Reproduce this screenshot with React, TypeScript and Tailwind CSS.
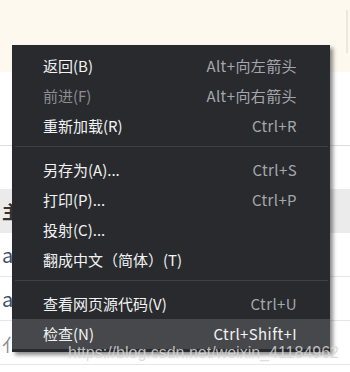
import React from "react";

type Item =
  | { kind: "item"; label: string; shortcut?: string; disabled?: boolean; active?: boolean }
  | { kind: "sep" };

const items: Item[] = [
  { kind: "item", label: "返回(B)", shortcut: "Alt+向左箭头" },
  { kind: "item", label: "前进(F)", shortcut: "Alt+向右箭头", disabled: true },
  { kind: "item", label: "重新加载(R)", shortcut: "Ctrl+R" },
  { kind: "sep" },
  { kind: "item", label: "另存为(A)...", shortcut: "Ctrl+S" },
  { kind: "item", label: "打印(P)...", shortcut: "Ctrl+P" },
  { kind: "item", label: "投射(C)..." },
  { kind: "item", label: "翻成中文（简体）(T)" },
  { kind: "sep" },
  { kind: "item", label: "查看网页源代码(V)", shortcut: "Ctrl+U" },
  { kind: "item", label: "检查(N)", shortcut: "Ctrl+Shift+I", active: true },
];

export default function App() {
  return (
    <div
      className="relative w-[350px] h-[372px] overflow-hidden bg-white"
      style={{ fontFamily: '"Noto Sans CJK SC", "Noto Sans", sans-serif' }}
    >
      {/* background page */}
      <div className="flex flex-col">
        <div className="h-[72px] bg-[#fdf9ef] flex justify-end pt-[10px] pr-[2px]">
          <div className="w-[2px] h-[43px] bg-[#ece8df]" />
        </div>
        <div className="h-[74px] border-b border-[#dcdce6]" />
        <div className="h-[43px]" />
        <div className="h-[44px] bg-[#ebebeb] flex items-center pl-[2px] text-[18px] font-bold text-[#333]">主</div>
        <div className="h-[44px] border-b border-[#e6e6e6] flex items-center pl-[2px] text-[20px] text-[#3d5068]">a</div>
        <div className="h-[44px] border-b border-[#e6e6e6] flex items-center pl-[2px] text-[20px] text-[#3d5068]">a</div>
        <div className="h-[44px] border-b border-[#e6e6e6] flex items-center pl-[2px] pt-[4px] text-[18px] text-[#888]">亻</div>
      </div>

      {/* context menu */}
      <div className="absolute left-[12px] top-[45px] w-[318px] bg-[#292a2d] pt-[6px] pb-[3px] shadow-[3px_3px_4px_rgba(0,0,0,0.45)] text-[15px]">
        {items.map((it, i) =>
          it.kind === "sep" ? (
            <div key={i} className="pt-[5px] pb-[8px] pl-[3px] pr-[2px]">
              <div className="h-px bg-[#3f4044]" />
            </div>
          ) : (
            <div
              key={i}
              className={
                "h-[30px] flex items-center justify-between pl-[31px] pr-[33px] " +
                (it.active ? "bg-[#47484b]" : "")
              }
            >
              <span className={it.disabled ? "text-[#8b8e93]" : "text-[#f1f3f4]"}>{it.label}</span>
              {it.shortcut && (
                <span
                  className={
                    "tracking-[0.4px] " + (it.active ? "text-[#f1f3f4]" : "text-[#a4a8ad]")
                  }
                >
                  {it.shortcut}
                </span>
              )}
            </div>
          )
        )}
      </div>

      {/* watermark */}
      <div
        className="absolute left-[68px] top-[343px] text-[16px] leading-[20px] text-[rgba(215,215,215,0.85)] whitespace-nowrap"
        style={{ fontFamily: '"Liberation Sans", Arial, sans-serif' }}
      >
        https://blog.csdn.net/weixin_41184962
      </div>
    </div>
  );
}
